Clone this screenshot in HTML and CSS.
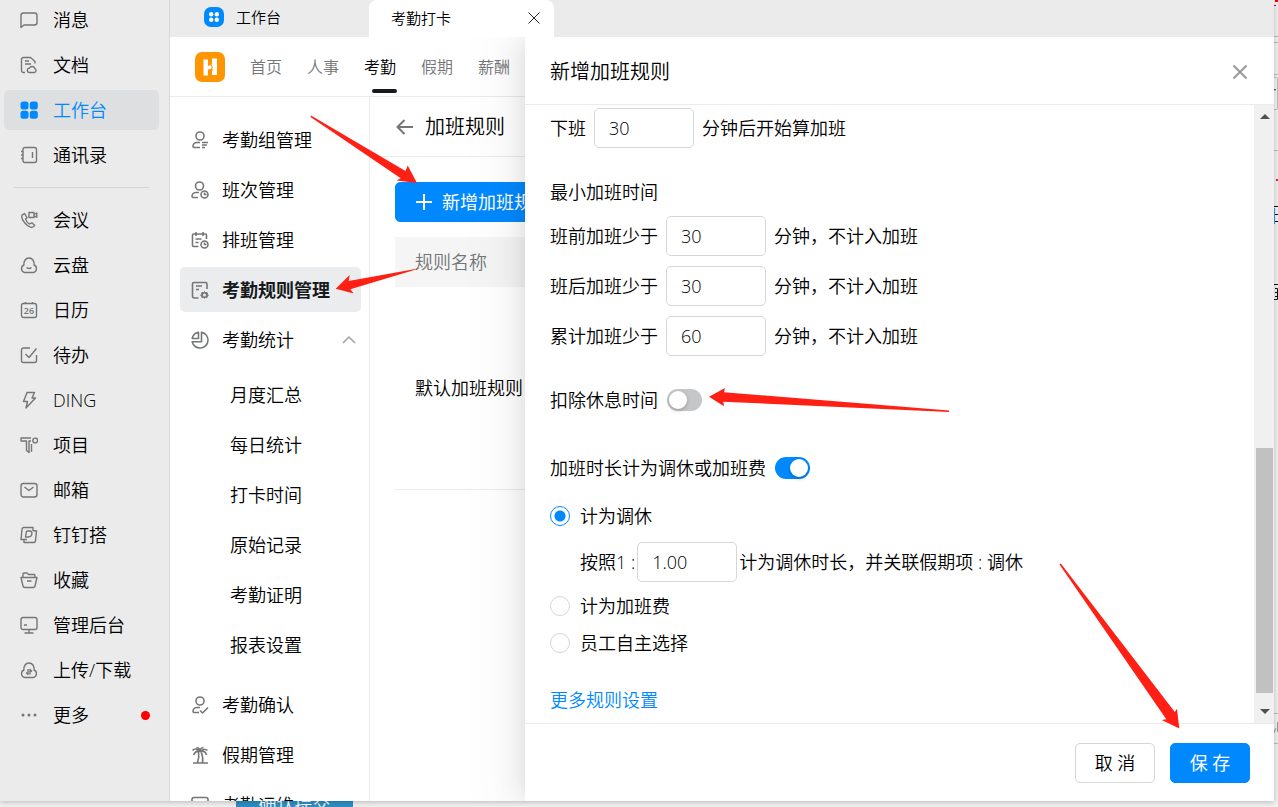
FILE: index.html
```html
<!DOCTYPE html>
<html lang="zh-CN">
<head>
    <meta charset="UTF-8">
    <title>考勤打卡</title>
    <link rel="stylesheet" href="styles.css">
</head>
<body>
<div class="desktop">
    <button type="button" class="behind-btn">确认提交</button>
    <svg class="behind-edge" width="4" height="807" viewBox="0 0 4 807">
        <path d="M1 0h3v2H1zM0 5h2v1H0z" fill="#f00"/>
        <path d="M0 42h4v32H0z" fill="#f2f2f2"/>
        <path d="M0 78h3v31H0z" fill="#f6f6f6"/>
        <path d="M0 36.500h4M0 42.500h4M0 74.500h4M0 77.500h2.500q1 0 1 1v30q0 1-1 1H0M0 150.500h4M0 713.500h4M0 743.500h4" fill="none" stroke="#bbb"/>
        <path d="M0 89h2l-1 2z" fill="#333"/>
        <path d="M2 179h2v2H2z" fill="#e22"/>
        <path d="M0 206.500h4M0 214.500h4M0 221.500h4M0 284.500h4M1 288.500h2.500v11H0M1 292.500h2M1 296.500h2" fill="none" stroke="#111"/>
        <path d="M.5 208v16" stroke="#3a9ae8"/>
        <path d="M0 733l2-5M3.500 722v10" stroke="#999"/>
    </svg>

    <div class="window">
        <div class="sidebar">
            <a class="side-item"><svg viewBox="0 0 18 18"><path d="M3.500 2h11A2.500 2.500 0 0 1 17 4.500v7a2.500 2.500 0 0 1-2.500 2.500H4l-3 2.500v-12A2.500 2.500 0 0 1 3.500 2z"/></svg>消息</a>
            <a class="side-item"><svg viewBox="0 0 18 18"><path d="M5 16.500H3.500a2 2 0 0 1-2-2v-11a2 2 0 0 1 2-2h7l4.500 4v2M5 5h4M5 8h6M9.500 16.500a2.200 2.200 0 0 1 0-4.400 2.800 2.800 0 0 1 5.300.600 2 2 0 0 1-.3 3.800z"/></svg>文档</a>
            <a class="side-item active"><svg viewBox="0 0 18 18"><rect x="0.500" y="0.500" width="8" height="8" rx="2.500"/><rect x="9.800" y="0.500" width="8" height="8" rx="2.500"/><rect x="0.500" y="9.800" width="8" height="8" rx="2.500"/><rect x="9.800" y="9.800" width="8" height="8" rx="2.500"/></svg>工作台</a>
            <a class="side-item"><svg viewBox="0 0 18 18"><rect x="3" y="1.500" width="13.500" height="15" rx="2"/><path d="M1 5.500h2M1 9h2M1 12.500h2M12.500 6v6"/></svg>通讯录</a>
            <div class="side-line"></div>
            <a class="side-item"><svg viewBox="0 0 18 18"><path d="M4.500 2.500L2 4.200C.8 7 5 14.500 11 16.300c1.800.4 3-.6 3.700-2L11.800 11.800 9.600 13C7.500 12 6 10 5.600 8.200L7 6.500zM9 1.500h5v5H9zM14 3.500l2.800-1.500v4.200L14 5"/></svg>会议</a>
            <a class="side-item"><svg viewBox="0 0 18 18"><path d="M4.500 16.500a4 4 0 0 1-.6-7.500C3.700 5 5.500 2 9 2s5.300 3 5.100 7a4 4 0 0 1-.6 7.500zM6.500 11.500q2.500 2 5 0"/></svg>云盘</a>
            <a class="side-item"><svg viewBox="0 0 18 18"><rect x="1.500" y="2.500" width="15" height="14" rx="2"/><path d="M5.500 1v2M12.500 1v2"/><text x="9" y="13">26</text></svg>日历</a>
            <a class="side-item"><svg viewBox="0 0 18 18"><path d="M10 2H3.500a2 2 0 0 0-2 2v10.500a2 2 0 0 0 2 2h11a2 2 0 0 0 2-2V9M5.500 8l3.500 3.500L16.500 2.500"/></svg>待办</a>
            <a class="side-item"><svg viewBox="0 0 18 18"><path d="M7 1.500h7.500L12 7h3.500L6 17l1.500-6.500H3.500z"/></svg>DING</a>
            <a class="side-item"><svg viewBox="0 0 18 18"><path d="M11 2H1v3h5.500v9.500l2.500 2V5h2M11.500 8v8"/><circle cx="15.200" cy="4.500" r="2.400"/></svg>项目</a>
            <a class="side-item"><svg viewBox="0 0 18 18"><rect x="1" y="2.500" width="16" height="13.500" rx="2.500"/><path d="M4.500 6l4.500 3.500L13.500 6"/></svg>邮箱</a>
            <a class="side-item"><svg viewBox="0 0 18 18"><path d="M3.500 1.500H13v3l3.500.5-1 9.500a2 2 0 0 1-2 2H4v-3H1l1-10a2 2 0 0 1 1.500-2zM4 13.500h3M6.500 5H10c3 0 2.500 6-1.500 6H5.500L6.500 5"/></svg>钉钉搭</a>
            <a class="side-item"><svg viewBox="0 0 18 18"><path d="M1 6.500h16l-2 8.500a2 2 0 0 1-2 1.500H5A2 2 0 0 1 3 15zM3 6.500V3q0-1 1-1h3l1.500 1.500H14q1 0 1 1v2M7 10h4.500"/></svg>收藏</a>
            <a class="side-item"><svg viewBox="0 0 18 18"><rect x="1" y="1.500" width="16" height="12" rx="2"/><path d="M9 13.500V17M4.500 17h9M4 9h3"/></svg>管理后台</a>
            <a class="side-item"><svg viewBox="0 0 18 18"><path d="M4.500 16.500a4 4 0 0 1-.6-7.500C3.700 5 5.500 2 9 2s5.300 3 5.100 7a4 4 0 0 1-.6 7.500zM8 8v5.500L6 11.500M10 13.500V8.500l2 2"/></svg>上传/下载</a>
            <a class="side-item"><svg class="solid" viewBox="0 0 18 18"><circle cx="3" cy="9" r="1.500"/><circle cx="9" cy="9" r="1.500"/><circle cx="15" cy="9" r="1.500"/></svg>更多<i class="dot"></i></a>
        </div>

        <div class="workspace">
            <div class="tabs">
                <div class="tab">
                    <svg width="20" height="20" viewBox="0 0 20 20"><rect width="20" height="20" rx="7" fill="#0089ff"/><g fill="#fff"><circle cx="7.200" cy="7.200" r="2.200"/><circle cx="12.800" cy="7.200" r="2.200"/><circle cx="7.200" cy="12.800" r="2.200"/><circle cx="12.800" cy="12.800" r="2.200"/></g></svg>
                    工作台
                </div>
                <div class="tab current">
                    考勤打卡
                    <button type="button" class="icon-btn" aria-label="关闭标签"><svg width="12" height="12" viewBox="0 0 12 12"><path d="M.5.500l11 11M11.500.500l-11 11" stroke="#222"/></svg></button>
                </div>
            </div>

            <div class="webview">
                <div class="header">
                    <svg width="30" height="30" viewBox="0 0 30 30"><rect width="30" height="30" rx="7" fill="#ff9500"/><path d="M8.500 7.500h4.500v6.500l4-1.500V6.500h5V23h-5v-6.500l-4 1V23.500H8.500z" fill="#fff"/><path d="M13 11l4 3v5" fill="none" stroke="#ff9500"/></svg>
                    <a>首页</a>
                    <a>人事</a>
                    <a class="on">考勤</a>
                    <a>假期</a>
                    <a>薪酬</a>
                </div>
                <div class="content">
                    <div class="menu">
                        <a class="menu-item"><svg viewBox="0 0 18 18"><circle cx="9" cy="5" r="4"/><path d="M9 11.500H6a4 4 0 0 0-4 4q0 1 1 1h6M11 11.500h6M11 14h5M11 16.500h3"/></svg>考勤组管理</a>
                        <a class="menu-item"><svg viewBox="0 0 18 18"><circle cx="8.500" cy="5" r="4"/><path d="M8 11.500H5a4 4 0 0 0-4 4q0 1 1 1h5"/><circle cx="13.500" cy="13.500" r="3.500"/><path d="M13.500 11.500v2h2"/></svg>班次管理</a>
                        <a class="menu-item"><svg viewBox="0 0 18 18"><path d="M7.500 15.500H2.500q-1 0-1-1V4q0-1 1-1h12q1 0 1 1v4M5 1v4M12 1v4M4.500 8h6M4.500 11.500h3"/><circle cx="13.500" cy="13.500" r="3.500"/><path d="M13.500 11.500v2h2"/></svg>排班管理</a>
                        <a class="menu-item active"><svg viewBox="0 0 18 18"><path d="M7.500 17H3.500a2 2 0 0 1-2-2V3q0-1.500 1.500-1.500h11.500q1.500 0 1.500 1.500v5M5 5h6M5 8.500h3"/><path d="M13.500 10.500l1 1.200 1.600-.2.300 1.600 1 .9-1 1-.3 1.500-1.600-.2-1 1.100-1-1.100-1.600.2-.3-1.500-1-1 1-.9.300-1.600 1.600.2z" class="fill"/><circle cx="13.500" cy="14" r="1.500" fill="#ebecee" stroke="none"/></svg>考勤规则管理</a>
                        <a class="menu-item"><svg viewBox="0 0 18 18"><path d="M7.500 1.200v6.300H1.200A8 8 0 0 1 7.500 1.200zM10.500 1.200a8 8 0 1 1-9.300 9.600h9.300z"/></svg>考勤统计<svg class="fold" viewBox="0 0 14 8"><path d="M1 7l6-6 6 6"/></svg></a>
                        <div class="sub-menu">
                            <a>月度汇总</a>
                            <a>每日统计</a>
                            <a>打卡时间</a>
                            <a>原始记录</a>
                            <a>考勤证明</a>
                            <a>报表设置</a>
                        </div>
                        <a class="menu-item"><svg viewBox="0 0 18 18"><circle cx="9" cy="5" r="4"/><path d="M9 11.500H6a4 4 0 0 0-4 4q0 1 1 1h5M9 14.500l2.500 2.500L17 11.500"/></svg>考勤确认</a>
                        <a class="menu-item"><svg viewBox="0 0 18 18"><path d="M2 17h15M6.500 17q2-6 1-11.500M11.500 17q1-6-1.500-11.500M9 5.500Q5 4 2.500 9M9 5.500Q4.500 1 1.500 4.500M9 5.500Q9 2 5.500 1.500M9 5.500Q9 2 12.500 1.500M9 5.500q4.500-4 7.500-1M9 5.500Q14 4 15.500 9"/></svg>假期管理</a>
                        <a class="menu-item"><svg viewBox="0 0 18 18"><rect x="1" y="1.500" width="16" height="12" rx="2"/><path d="M9 13.500V17M4.500 17h9"/></svg>考勤运维</a>
                    </div>
                    <div class="main">
                        <div class="page-title">
                            <button type="button" class="icon-btn" aria-label="返回"><svg width="18" height="16" viewBox="0 0 18 16"><path d="M17 8H2M8.500 1L1.500 8l7 7" fill="none" stroke="#747677" stroke-width="2"/></svg></button>
                            加班规则
                        </div>
                        <div class="page-body">
                            <button type="button" class="btn primary add"><svg width="16" height="16" viewBox="0 0 16 16"><path d="M8 0v16M0 8h16" stroke="#fff" stroke-width="2"/></svg>新增加班规则</button>
                            <table class="rules">
                                <tr><th>规则名称</th></tr>
                                <tr><td>默认加班规则</td></tr>
                            </table>
                        </div>
                    </div>
                </div>

                <!-- 新增规则抽屉 -->
                <form class="drawer">
                    <div class="drawer-head">
                        新增加班规则
                        <button type="button" class="icon-btn" aria-label="关闭"><svg width="14" height="14" viewBox="0 0 14 14"><path d="M.500.500l13 13M13.500.500l-13 13" stroke="#999" stroke-width="2"/></svg></button>
                    </div>
                    <div class="drawer-mid">
                        <div class="drawer-body">
                            <div class="row"><label for="after">下班</label><input type="text" id="after" value="30">分钟后开始算加班</div>
                            <div class="group-title">最小加班时间</div>
                            <div class="group">
                                <div class="row"><label for="min1">班前加班少于</label><input type="text" id="min1" value="30">分钟，不计入加班</div>
                                <div class="row"><label for="min2">班后加班少于</label><input type="text" id="min2" value="30">分钟，不计入加班</div>
                                <div class="row"><label for="min3">累计加班少于</label><input type="text" id="min3" value="60">分钟，不计入加班</div>
                            </div>
                            <div class="switch-row"><label for="rest">扣除休息时间</label><input type="checkbox" class="switch" id="rest"></div>
                            <div class="switch-row"><label for="count">加班时长计为调休或加班费</label><input type="checkbox" class="switch" id="count" checked></div>
                            <label class="radio"><input type="radio" name="way" checked>计为调休</label>
                            <div class="row ratio"><label for="ratio">按照1 :</label><input type="text" id="ratio" value="1.00">计为调休时长，并关联假期项 : 调休</div>
                            <label class="radio"><input type="radio" name="way">计为加班费</label>
                            <label class="radio"><input type="radio" name="way">员工自主选择</label>
                            <a class="more" href="#">更多规则设置</a>
                        </div>
                        <div class="scrollbar">
                            <svg width="10" height="5" viewBox="0 0 10 5"><path d="M0 5l5-5 5 5z" fill="#505050"/></svg>
                            <div class="thumb"></div>
                            <svg width="10" height="5" viewBox="0 0 10 5"><path d="M0 0l5 5 5-5z" fill="#505050"/></svg>
                        </div>
                    </div>
                    <div class="drawer-foot">
                        <button type="button" class="btn">取 消</button>
                        <button type="button" class="btn primary">保 存</button>
                    </div>
                </form>
            </div>
        </div>
    </div>

    <svg class="marks" width="1278" height="807" viewBox="0 0 1278 807">
        <path d="M311 115.500L405.500 171l2.200-5.500 9.300 17.500-20.500-2.500 4.200-2.200L310.500 117z"/>
        <path d="M421 268l-72.300 13 1-6-14 13.800 18 4.700-3.400-4.200z"/>
        <path d="M949 410.500l-225-18.200 1-4.300-16 8.800 15 9.500-.7-4.600L949 412z"/>
        <path d="M1060.800 563.500l114 148.500 2.200-3.300 2.300 19.800-17.600-8.500 4.600-.7L1059.500 564.500z"/>
    </svg>
</div>
</body>
</html>
```
FILE: styles.css
```css
*{ margin:0; padding:0; box-sizing:border-box;}
body{font:350 18px/24px "Open Sans","Noto Sans CJK SC",sans-serif;color:#000;background:#f2f2f2;}
a{color:inherit;text-decoration:none;cursor:pointer;}
button,input{font:inherit;color:inherit;}
button{cursor:pointer;}
svg{flex:none;}
.icon-btn{display:flex;border:0;background:none;}

/* 桌面与窗口 */
.desktop{position:relative;height:100vh;padding:0 4px 6px 0;overflow:hidden;}
.behind-btn{position:absolute;left:236px;bottom:-12px;width:117px;height:30px;border:0;background:#2f8fc6;color:#fff;}
.behind-edge{position:absolute;right:0;top:0;}
.window{position:relative;display:flex;height:100%;background:#fff;box-shadow:0 1px 6px rgba(0,0,0,.25);}
.marks{position:absolute;left:0;top:0;fill:#ff2015;pointer-events:none;}

/* 左侧导航 */
.sidebar{display:flex;flex-direction:column;gap:5px;flex:none;width:170px;padding:0 10px 0 4px;background:#ebebeb;border-right:1px solid #d8d8d8;}
.side-item{display:flex;align-items:center;gap:15px;height:40px;padding:0 9px 0 16px;border-radius:5px;}
.side-item svg,.menu-item svg{width:18px;height:18px;fill:none;stroke:#747677;stroke-width:1.4;stroke-linejoin:round;}
.side-item text{font:600 9px "Open Sans",sans-serif;text-anchor:middle;fill:#747677;stroke:none;}
.side-item.active{background:#dddfe1;color:#0089ff;}
.side-item.active svg{fill:#0089ff;stroke:none;}
.side-item .solid{fill:#747677;stroke:none;}
.side-line{height:1px;margin:7px 10px;background:#d5d5d5;}
.dot{width:9px;height:9px;margin-left:auto;border-radius:50%;background:#f00;}

/* 标签栏 */
.workspace{display:flex;flex-direction:column;flex:1;min-width:0;}
.tabs{display:flex;height:37px;flex:none;background:#ebebeb;font-size:15px;}
.tab{display:flex;align-items:center;gap:12px;width:199px;padding:0 0 4px 34px;}
.tab.current{justify-content:space-between;width:185px;padding:0 14px 2px 22px;border-radius:8px 8px 0 0;background:#fff;}
.webview{position:relative;display:flex;flex-direction:column;flex:1;min-height:0;overflow:hidden;}
.header{display:flex;align-items:center;gap:25px;height:60px;flex:none;padding-left:25px;border-bottom:1px solid #ebebeb;font-size:16px;color:#747677;}
.header .on{position:relative;color:#000;}
.header .on:after{content:"";position:absolute;left:8px;bottom:-14px;width:25px;height:4px;border-radius:2px;background:#171a1d;}

/* 考勤菜单 */
.content{display:flex;flex:1;min-height:0;}
.menu{display:flex;flex-direction:column;gap:5px;flex:none;width:200px;padding:20px 8px 0 10px;border-right:1px solid #ebebeb;}
.menu-item{display:flex;align-items:center;flex:none;gap:13px;height:45px;padding:0 5px 0 11px;border-radius:5px;}
.menu-item svg{stroke-width:1.6;}
.menu-item .fill{fill:#747677;stroke-width:1;}
.menu-item.active{background:#ebecee;color:#171a1d;font-weight:700;}
.menu-item .fold{width:14px;height:8px;margin-left:auto;stroke:#a2a3a5;}
.sub-menu{display:flex;flex-direction:column;gap:5px;flex:none;padding:6px 0 9px 50px;}
.sub-menu a{line-height:45px;}

.main{flex:1;min-width:0;}
.page-title{display:flex;align-items:center;gap:11px;height:60px;padding-left:26px;border-bottom:1px solid #ebebeb;font-size:20px;}
.page-body{padding:25px 25px 0;}
.btn{height:40px;min-width:80px;border:1px solid #d5d6d7;border-radius:5px;background:#fff;}
.btn.primary{border-color:#0089ff;background:#0089ff;color:#fff;font-weight:400;}
.btn.add{display:flex;align-items:center;gap:10px;padding:0 20px;}
.rules{width:100%;margin-top:15px;border-collapse:collapse;text-align:left;}
.rules th{height:50px;padding-left:20px;background:#f5f5f5;color:#747677;font-weight:350;}
.rules td{height:202px;padding-left:20px;border-bottom:1px solid #ebebeb;}

/* 抽屉 */
.drawer{position:absolute;top:0;right:0;bottom:0;width:749px;display:flex;flex-direction:column;background:#fff;box-shadow:-6px 0 16px -8px rgba(0,0,0,.08),-9px 0 28px rgba(0,0,0,.06),-12px 0 48px 16px rgba(0,0,0,.03);}
.drawer-head{display:flex;align-items:center;justify-content:space-between;height:68px;flex:none;padding:2px 27px 0 25px;border-bottom:1px solid #ebebeb;font-size:20px;}
.drawer-mid{display:flex;flex:1;min-height:0;}
.drawer-body{flex:1;padding:3px 0 0 25px;overflow:hidden;}
.row{display:flex;align-items:center;gap:8px;height:40px;}
.row input{width:100px;height:40px;padding:0 14px;border:1px solid #d5d6d7;border-radius:5px;background:#fff;outline:none;}
.group-title{margin:32px 0 12px;}
.group{display:flex;flex-direction:column;gap:10px;}
.switch-row{display:flex;align-items:center;gap:9px;height:24px;margin:32px 0 44px;}
.switch{appearance:none;width:35px;height:22px;border-radius:11px;background:#c5c6c7;}
.switch:before{content:"";display:block;width:18px;height:18px;margin:2px;border-radius:50%;background:#fff;box-shadow:0 2px 4px rgba(0,0,0,.2);}
.switch:checked{background:#0089ff;}
.switch:checked:before{margin-left:15px;}
.switch-row + .switch-row{margin-bottom:24px;}
.radio{display:flex;align-items:center;gap:10px;height:24px;margin-bottom:13px;}
.radio input{appearance:none;width:20px;height:20px;border:1px solid #d5d6d7;border-radius:50%;}
.radio input:checked{border-color:#0089ff;background:radial-gradient(#0089ff 5px,transparent 6px);}
.ratio{gap:2px;margin:14px 0 12px;padding-left:30px;}
.more{display:block;margin-top:33px;color:#0089ff;}
.scrollbar{display:flex;flex-direction:column;align-items:center;width:20px;padding:9px 1px 9px 2px;background:#f0f0f0;}
.thumb{width:100%;height:245px;margin:auto 0 16px;background:#c1c1c1;}
.drawer-foot{display:flex;justify-content:flex-end;gap:15px;flex:none;height:78px;padding:19px 24px 0;border-top:1px solid #ebebeb;}
```
